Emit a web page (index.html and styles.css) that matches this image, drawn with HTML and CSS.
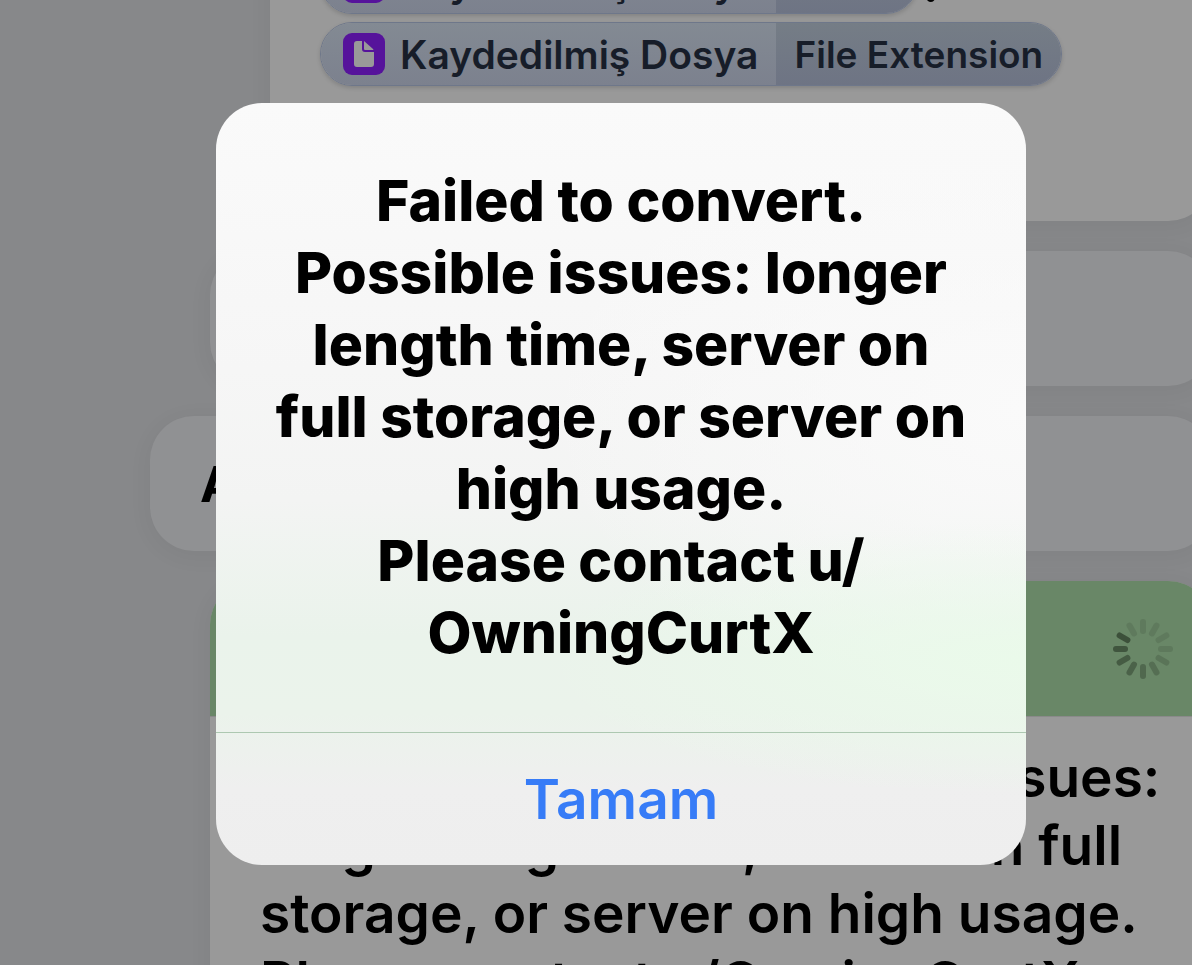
FILE: index.html
```html
<!DOCTYPE html>
<html lang="tr">
<head>
    <meta charset="UTF-8">
    <meta name="viewport" content="width=device-width, initial-scale=1.0">
    <title>Kestirmeler</title>
    <link rel="stylesheet" href="styles.css">
</head>
<body>

<main class="workflow">
    <section class="card card-nested">
        <div class="token-line">
            <span class="token">
                <span class="token-main">
                    <svg class="token-icon" viewBox="0 0 42 42" aria-hidden="true">
                        <rect width="42" height="42" rx="9" fill="#56139b"/>
                        <path d="M14 8h5v8q0 3 3 3h9v12q0 3-3 3H14q-3 0-3-3V11q0-3 3-3z" fill="#999"/>
                        <path d="M21 8l9 8q1 1 0 1h-8q-1 0-1-1z" fill="#999"/>
                    </svg>
                    Kaydedilmiş Dosya
                </span>
                <span class="token-detail">Name</span>
            </span>
            <span class="token-text">.</span>
        </div>
        <div class="token-line">
            <span class="token">
                <span class="token-main">
                    <svg class="token-icon" viewBox="0 0 42 42" aria-hidden="true">
                        <rect width="42" height="42" rx="9" fill="#56139b"/>
                        <path d="M14 8h5v8q0 3 3 3h9v12q0 3-3 3H14q-3 0-3-3V11q0-3 3-3z" fill="#999"/>
                        <path d="M21 8l9 8q1 1 0 1h-8q-1 0-1-1z" fill="#999"/>
                    </svg>
                    Kaydedilmiş Dosya
                </span>
                <span class="token-detail">File Extension</span>
            </span>
        </div>
    </section>

    <section class="card card-row"></section>

    <section class="card card-row card-outer">A</section>

    <section class="card card-comment">
        <div class="comment-header">
            <svg class="spinner" viewBox="-30 -30 60 60" aria-hidden="true">
                <g stroke="#384b36" stroke-width="6" stroke-linecap="round">
                    <path d="M0-18v-9" opacity=".2"/>
                    <path d="M0-18v-9" opacity=".2" transform="rotate(30)"/>
                    <path d="M0-18v-9" opacity=".2" transform="rotate(60)"/>
                    <path d="M0-18v-9" opacity=".22" transform="rotate(90)"/>
                    <path d="M0-18v-9" opacity=".3" transform="rotate(120)"/>
                    <path d="M0-18v-9" opacity=".4" transform="rotate(150)"/>
                    <path d="M0-18v-9" opacity=".5" transform="rotate(180)"/>
                    <path d="M0-18v-9" opacity=".6" transform="rotate(210)"/>
                    <path d="M0-18v-9" opacity=".72" transform="rotate(240)"/>
                    <path d="M0-18v-9" opacity=".82" transform="rotate(270)"/>
                    <path d="M0-18v-9" opacity=".9" transform="rotate(300)"/>
                    <path d="M0-18v-9" opacity=".2" transform="rotate(330)"/>
                </g>
            </svg>
        </div>
        <p class="comment-text">
            Failed to convert. Possible issues:<br>
            longer length time, server on full<br>
            storage, or server on high usage.<br>
            Please contact u/OwningCurtX
        </p>
    </section>
</main>

<div class="overlay">
    <div class="alert" role="alertdialog" aria-labelledby="alert-title">
        <h1 class="alert-title" id="alert-title">
            Failed to convert.<br>
            Possible issues: longer<br>
            length time, server on<br>
            full storage, or server on<br>
            high usage.<br>
            Please contact u/<br>
            OwningCurtX
        </h1>
        <button class="alert-button" type="button">Tamam</button>
    </div>
</div>

</body>
</html>
```

FILE: styles.css
```css
* {
    box-sizing: border-box;
}
body {
    margin: 0;
    height: 100vh;
    overflow: hidden;
    background-color: #87888a;
    font-family: Inter, "Liberation Sans", sans-serif;
    color: #000;
}

/* the list is scrolled, so its top and right edges run off the screen */
.workflow {
    display: flex;
    flex-direction: column;
    gap: 30px;
    margin: -60px -20px 0 150px;
}
.card {
    margin-left: 60px;
    border-radius: 44px;
    background-color: #999;
    box-shadow: 0 4px 24px rgba(0, 0, 0, 0.05);
}
.card-nested {
    margin-left: 120px;
    padding: 6px 50px 131px;
}
.card-row {
    display: flex;
    align-items: center;
    height: 135px;
    padding: 0 50px;
    background-color: #909193;
    font-size: 50px;
    font-weight: 700;
}
.card-outer {
    margin-left: 0;
}

.token-line {
    display: flex;
    align-items: center;
    height: 72px;
    white-space: nowrap;
}
.token {
    display: flex;
    height: 64px;
    overflow: hidden;
    border: 1px solid #6e778a;
    border-radius: 32px;
    box-shadow: 0 2px 4px rgba(0, 0, 0, 0.15);
    color: #171d29;
    font-weight: 600;
}
.token-main,
.token-detail {
    display: flex;
    align-items: center;
}
.token-main {
    gap: 15px;
    padding: 0 18px 0 22px;
    background: linear-gradient(#838a93, #7c818e);
    font-size: 39px;
}
.token-detail {
    padding: 0 18px;
    background: linear-gradient(#757d86, #6e7484);
    font-size: 37px;
}
.token-icon {
    width: 42px;
    height: 42px;
}
.token-text {
    margin-left: 4px;
    font-size: 55px;
    font-weight: 600;
}

.card-comment {
    overflow: hidden;
}
.comment-header {
    display: flex;
    align-items: center;
    justify-content: flex-end;
    height: 136px;
    padding-right: 39px;
    border-bottom: 1px solid #8a8a8a;
    background-color: #698767;
}
.spinner {
    width: 60px;
    height: 60px;
}
.comment-text {
    margin: 0;
    padding: 26px 50px;
    font-size: 55px;
    font-weight: 600;
    line-height: 68px;
    white-space: nowrap;
}

.overlay {
    position: fixed;
    inset: 0;
    display: flex;
    align-items: center;
    justify-content: center;
    padding: 2px 0 0 50px;
}
.alert {
    width: 100%;
    max-width: 810px;
    overflow: hidden;
    border-radius: 46px;
    background:
        radial-gradient(ellipse 60% 18% at 100% 73%, #eafaea, transparent),
        radial-gradient(ellipse 60% 40% at 100% 40%, #fafafa, transparent),
        linear-gradient(#fafafa 0%, #f6f6f6 35%, #f3f4f3 52%, #eaf3eb 70%, #ebf3eb 80%, #efefef 90%, #eee 100%);
}
.alert-title {
    margin: 0;
    padding: 62px 0 63px;
    font-size: 57px;
    font-weight: 800;
    line-height: 72px;
    text-align: center;
    white-space: nowrap;
}
.alert-button {
    display: block;
    width: 100%;
    height: 133px;
    padding: 0;
    border: 0;
    border-top: 1px solid #adc8b1;
    background: transparent;
    font-family: inherit;
    font-size: 55px;
    font-weight: 600;
    color: #377cf7;
    cursor: pointer;
}
```
